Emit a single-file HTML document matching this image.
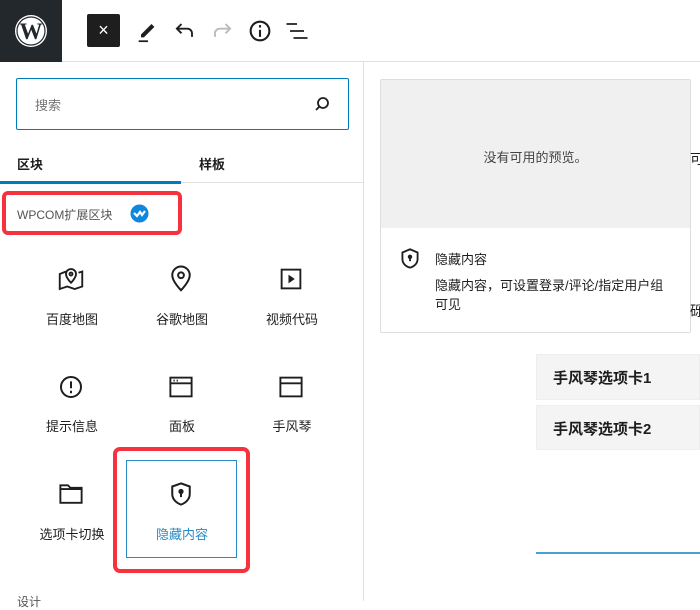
<!DOCTYPE html>
<html><head><meta charset="utf-8"><style>
*{box-sizing:border-box;margin:0;padding:0}
body{width:700px;height:601px;overflow:hidden;background:#fff;font-family:"Liberation Sans","Noto Sans CJK SC",sans-serif;color:#1e1e1e;position:relative}
.abs{position:absolute}
.lbl{position:absolute;font-size:13px;text-align:center;width:110px}
</style></head><body>
<div class="abs" style="left:0;top:0;width:700px;height:62px;border-bottom:1px solid #e0e0e0"></div>
<div class="abs" style="left:0;top:0;width:62px;height:62px;background:#23282d"></div>
<svg class="abs" style="left:14px;top:14px" width="34" height="34" viewBox="0 0 34 34"><circle cx="17" cy="17" r="16" fill="#fff"/><circle cx="17" cy="17" r="14" fill="none" stroke="#23282d" stroke-width="1.2"/><text x="17" y="25" font-family="Liberation Serif" font-weight="bold" font-size="23" text-anchor="middle" fill="#23282d">W</text></svg>
<div class="abs" style="left:87px;top:14px;width:33px;height:33px;background:#1e1e1e;border-radius:2px;color:#fff;font-size:18px;text-align:center;line-height:33px">×</div>
<svg class="abs" style="left:134px;top:17px" width="28" height="28" viewBox="0 0 24 24"><path d="M6 15l9-9 2.5 2.5-9 9H6z" fill="#1e1e1e"/><rect x="4" y="20" width="8" height="1.5" fill="#1e1e1e"/></svg>
<svg class="abs" style="left:171px;top:17px" width="28" height="28" viewBox="0 0 24 24" fill="none" stroke="#1e1e1e" stroke-width="1.6"><path d="M18 17v-3a4 4 0 0 0-4-4H6M9 6l-4 4 4 4"/></svg>
<svg class="abs" style="left:208px;top:17px" width="28" height="28" viewBox="0 0 24 24" fill="none" stroke="#bbb" stroke-width="1.6"><path d="M6 17v-3a4 4 0 0 1 4-4h8M15 6l4 4-4 4"/></svg>
<svg class="abs" style="left:246px;top:17px" width="28" height="28" viewBox="0 0 24 24" fill="none" stroke="#1e1e1e" stroke-width="1.8"><circle cx="12" cy="12" r="8"/><path d="M12 11v6M12 7v2"/></svg>
<svg class="abs" style="left:283px;top:17px" width="28" height="28" viewBox="0 0 24 24" stroke="#1e1e1e" stroke-width="1.6"><path d="M3 6h9M6 12h12M9 18h12"/></svg>
<div class="abs" style="left:363px;top:62px;width:1px;height:539px;background:#e0e0e0"></div>
<div class="abs" style="left:16px;top:78px;width:333px;height:52px;border:1.5px solid #007cba;border-radius:2px;background:#fff"></div>
<div class="abs" style="left:35px;top:95px;font-size:13px;color:#757575">搜索</div>
<svg class="abs" style="left:313px;top:95px" width="18" height="18" viewBox="0 0 18 18" fill="none" stroke="#1e1e1e" stroke-width="1.8"><circle cx="10" cy="8" r="5"/><path d="M6.5 11.5L3 15"/></svg>
<div class="abs" style="left:17px;top:154px;font-size:13px;font-weight:bold">区块</div>
<div class="abs" style="left:199px;top:154px;font-size:13px;font-weight:bold">样板</div>
<div class="abs" style="left:0;top:182px;width:363px;height:1px;background:#e0e0e0"></div>
<div class="abs" style="left:0;top:181px;width:181px;height:3px;background:#007cba"></div>
<div class="abs" style="left:2px;top:191px;width:180px;height:44px;border:4px solid #f6323f;border-radius:6px"></div>
<div class="abs" style="left:17px;top:206px;font-size:12px;color:#555">WPCOM扩展区块</div>
<svg class="abs" style="left:130px;top:204px" width="19" height="19" viewBox="0 0 19 19"><circle cx="9.5" cy="9.5" r="9" fill="#0f87e0"/><path d="M4 9l3 3 3-4 2 3 3-4" fill="none" stroke="#fff" stroke-width="2.2"/></svg>
<svg class="abs" style="left:56px;top:264px" width="30" height="30" viewBox="0 0 24 24" fill="none" stroke="#1e1e1e" stroke-width="1.5"><path d="M8 6L3 8v12l6-2 6 2 6-2V6l-3 1"/><path d="M12 15s-4-4-4-7a4 4 0 0 1 8 0c0 3-4 7-4 7z"/><circle cx="12" cy="8" r="1.2"/></svg>
<svg class="abs" style="left:166px;top:264px" width="30" height="30" viewBox="0 0 24 24" fill="none" stroke="#1e1e1e" stroke-width="1.6"><path d="M12 21s-7-7-7-12a7 7 0 0 1 14 0c0 5-7 12-7 12z"/><circle cx="12" cy="9" r="2.3"/></svg>
<svg class="abs" style="left:276px;top:264px" width="30" height="30" viewBox="0 0 24 24"><rect x="4.5" y="4.5" width="15" height="15" fill="none" stroke="#1e1e1e" stroke-width="1.5"/><path d="M10 8.5v7l5-3.5z" fill="#1e1e1e"/></svg>
<div class="lbl" style="left:17px;top:309px">百度地图</div>
<div class="lbl" style="left:127px;top:309px">谷歌地图</div>
<div class="lbl" style="left:237px;top:309px">视频代码</div>
<svg class="abs" style="left:56px;top:372px" width="30" height="30" viewBox="0 0 24 24" fill="none" stroke="#1e1e1e" stroke-width="1.6"><circle cx="12" cy="12" r="8"/><path d="M12 7.5v5.5M12 15v2"/></svg>
<svg class="abs" style="left:166px;top:372px" width="30" height="30" viewBox="0 0 24 24" fill="none" stroke="#1e1e1e" stroke-width="1.5"><rect x="3.5" y="4.5" width="17" height="15"/><path d="M3.5 9h17M6 6.8h1M8.5 6.8h1"/></svg>
<svg class="abs" style="left:276px;top:372px" width="30" height="30" viewBox="0 0 24 24" fill="none" stroke="#1e1e1e" stroke-width="1.5"><rect x="3.5" y="4.5" width="17" height="15"/><path d="M3.5 9h17"/></svg>
<div class="lbl" style="left:17px;top:416px">提示信息</div>
<div class="lbl" style="left:127px;top:416px">面板</div>
<div class="lbl" style="left:237px;top:416px">手风琴</div>
<div class="abs" style="left:113px;top:447px;width:137px;height:126px;border:4px solid #f6323f;border-radius:7px"></div>
<div class="abs" style="left:126px;top:460px;width:111px;height:98px;border:1px solid #2a8ac6"></div>
<svg class="abs" style="left:56px;top:479px" width="30" height="30" viewBox="0 0 24 24" fill="none" stroke="#1e1e1e" stroke-width="1.5"><path d="M3.5 5h6l2 2h9v12h-17z"/><path d="M3.5 8h17"/></svg>
<svg class="abs" style="left:166px;top:479px" width="30" height="30" viewBox="0 0 24 24" fill="none" stroke="#1e1e1e" stroke-width="1.6"><path d="M12 3.5l7 2.5v6c0 4-3 7-7 8.5-4-1.5-7-4.5-7-8.5V6z"/><circle cx="12" cy="10" r="1.3" fill="#1e1e1e"/><path d="M12 11v3.5"/></svg>
<div class="lbl" style="left:17px;top:524px">选项卡切换</div>
<div class="lbl" style="left:127px;top:524px;color:#2a8ac6">隐藏内容</div>
<div class="abs" style="left:17px;top:593px;font-size:12px;color:#555">设计</div>
<div class="abs" style="left:380px;top:79px;width:311px;height:254px;border:1px solid #ddd;border-radius:2px;background:#fff"></div>
<div class="abs" style="left:381px;top:80px;width:309px;height:148px;background:#f0f0f0"></div>
<div class="abs" style="left:381px;top:147px;width:309px;text-align:center;font-size:13px;color:#444">没有可用的预览。</div>
<svg class="abs" style="left:397px;top:246px" width="26" height="26" viewBox="0 0 24 24" fill="none" stroke="#1e1e1e" stroke-width="1.7"><path d="M12 3l7 3v6c0 4-3 7-7 8-4-1-7-4-7-8V6z"/><circle cx="12" cy="10" r="1.2" fill="#1e1e1e"/><path d="M12 11v3"/></svg>
<div class="abs" style="left:435px;top:249px;font-size:13px">隐藏内容</div>
<div class="abs" style="left:435px;top:276px;width:260px;font-size:13px;line-height:19px;white-space:nowrap">隐藏内容，可设置登录/评论/指定用户组<br>可见</div>
<div class="abs" style="left:690px;top:149px;font-size:14px">可</div>
<div class="abs" style="left:690px;top:301px;font-size:14px">砾</div>
<div class="abs" style="left:536px;top:354px;width:164px;height:46px;background:#f4f4f4;border:1px solid #eee"></div>
<div class="abs" style="left:553px;top:367px;font-size:15px;font-weight:bold">手风琴选项卡1</div>
<div class="abs" style="left:536px;top:405px;width:164px;height:45px;background:#f4f4f4;border:1px solid #eee"></div>
<div class="abs" style="left:553px;top:418px;font-size:15px;font-weight:bold">手风琴选项卡2</div>
<div class="abs" style="left:536px;top:552px;width:164px;height:2px;background:#4a9fd4"></div>
</body></html>
